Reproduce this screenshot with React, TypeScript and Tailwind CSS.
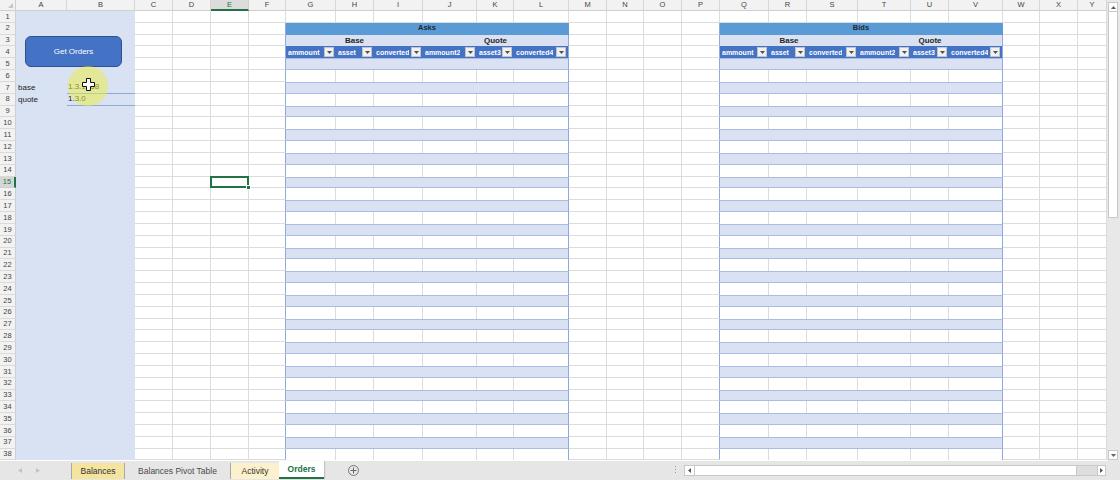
import React from "react";

const LETTERS = ["A", "B", "C", "D", "E", "F", "G", "H", "I", "J", "K", "L", "M", "N", "O", "P", "Q", "R", "S", "T", "U", "V", "W", "X", "Y"];
const HEADERS = ["ammount", "asset", "converted", "ammount2", "asset3", "converted4"];

const GRID =
  "grid grid-cols-[16px_51px_68px_38px_38px_38px_37px_50px_38px_49px_54px_37px_55px_38px_37px_38px_38px_49px_38px_51px_53px_38px_54px_37px_38px_29px] grid-rows-[11px_repeat(38,11.83px)]";

const plain = "border-r border-b border-r-[#dcdcdc] border-b-[#dcdcdc] bg-white";
const beforeTable = "border-r border-b border-r-[#8eaadb] border-b-[#dcdcdc] bg-white";

const DownTri = ({ color = "#505050" }: { color?: string }) => (
  <svg width="5" height="3" viewBox="0 0 5 3">
    <path d="M0 0h5L2.5 3z" fill={color} />
  </svg>
);

function tableCells(r: number, title: string, key: string) {
  if (r === 1) {
    return HEADERS.map((h, i) => <div key={`${key}-${i}`} className={plain} />);
  }
  if (r === 2) {
    return [
      <div
        key={key}
        className="col-span-6 bg-[#5b9bd5] border-r border-b border-r-[#5b9bd5] border-b-[#5b9bd5] flex items-center justify-center text-[7.5px] font-bold leading-none text-[#1d2733]"
      >
        {title}
      </div>,
    ];
  }
  if (r === 3) {
    return [
      <div
        key={`${key}-b`}
        className="col-span-3 bg-[#d9e1f2] flex items-center justify-center text-[8px] font-bold leading-none text-[#262626]"
      >
        Base
      </div>,
      <div
        key={`${key}-q`}
        className="col-span-3 bg-[#d9e1f2] border-r border-r-[#8eaadb] flex items-center justify-center text-[8px] font-bold leading-none text-[#262626]"
      >
        Quote
      </div>,
    ];
  }
  if (r === 4) {
    return HEADERS.map((h, i) => (
      <div
        key={`${key}-${i}`}
        className={
          i === 5
            ? "bg-[#4472c4] border-r border-r-[#8eaadb] flex items-center justify-between pl-[2px] pr-[2px]"
            : "bg-[#4472c4] flex items-center justify-between pl-[2px] pr-[2px]"
        }
      >
        <span className="text-white font-bold text-[7px] leading-none whitespace-nowrap overflow-hidden">{h}</span>
        <span className="shrink-0 w-[10px] h-[10px] bg-[#f0f0f0] border border-[#c4c4c4] flex items-center justify-center">
          <DownTri />
        </span>
      </div>
    ));
  }
  if (r % 2 === 1) {
    return [
      <div
        key={key}
        className="col-span-6 bg-[#d9e1f2] border-r border-b border-t border-r-[#8eaadb] border-b-[#a9bde3] border-t-[#a9bde3]"
      />,
    ];
  }
  return HEADERS.map((h, i) => (
    <div
      key={`${key}-${i}`}
      className={
        i === 5
          ? "bg-white border-r border-r-[#8eaadb]"
          : "bg-white border-r border-r-[#dcdcdc]"
      }
    />
  ));
}

function leftCell(r: number, c: number) {
  const key = `lp-${r}-${c}`;
  if (c === 1) {
    const label = r === 7 ? "base" : r === 8 ? "quote" : "";
    return (
      <div key={key} className="bg-[#d9e2f3] flex items-center pl-[2px] text-[8px] leading-none text-[#222]">
        {label}
      </div>
    );
  }
  const val = r === 7 ? "1.3.1668" : r === 8 ? "1.3.0" : "";
  return (
    <div
      key={key}
      className={
        r === 7 || r === 8
          ? "bg-[#d9e2f3] border-b border-b-[#8eaadb] flex items-center pl-[1px] text-[8px] leading-none text-[#222]"
          : "bg-[#d9e2f3]"
      }
    >
      {val}
    </div>
  );
}

function row(r: number) {
  const out: React.ReactNode[] = [];
  out.push(
    <div
      key={`rh-${r}`}
      className={
        r === 15
          ? "bg-[#d6d6d6] border-r-2 border-b border-r-[#217346] border-b-[#cfcfcf] flex items-center justify-center text-[7.5px] leading-none text-[#217346]"
          : "bg-[#f2f2f2] border-r border-b border-r-[#cfcfcf] border-b-[#dadada] flex items-center justify-center text-[7.5px] leading-none text-[#444]"
      }
    >
      {r}
    </div>
  );
  for (let c = 1; c <= 25; c++) {
    if (c <= 2) {
      out.push(leftCell(r, c));
      continue;
    }
    if (c === 7 || c === 17) {
      out.push(...tableCells(r, c === 7 ? "Asks" : "Bids", `t${c}-${r}`));
      c += 5;
      continue;
    }
    if (c === 5 && r === 15) {
      out.push(
        <div key={`c-${r}-${c}`} className={`${plain} relative`}>
          <div className="absolute left-[-1px] top-[-1px] right-[-1px] bottom-[-1px] border-2 border-[#217346]" />
          <div className="absolute right-[-3px] bottom-[-3px] w-[5px] h-[5px] bg-[#217346] border border-white" />
        </div>
      );
      continue;
    }
    const cls = (c === 6 || c === 16) && r >= 2 ? beforeTable : plain;
    out.push(<div key={`c-${r}-${c}`} className={cls} />);
  }
  return out;
}

const Sheet = () => (
  <div className="relative w-[1107px] h-[461px] overflow-hidden">
    <div className={GRID}>
      <div className="bg-[#f2f2f2] border-r border-b border-r-[#cfcfcf] border-b-[#cfcfcf] relative">
        <svg className="absolute right-[2px] bottom-[2px]" width="5" height="5" viewBox="0 0 5 5">
          <path d="M5 0v5H0z" fill="#c6c6c6" />
        </svg>
      </div>
      {LETTERS.map((l) => (
        <div
          key={l}
          className={
            l === "E"
              ? "bg-[#dcdcdc] border-r border-b-2 border-r-[#cfcfcf] border-b-[#217346] flex items-center justify-center text-[7.5px] leading-none text-[#217346]"
              : "bg-[#f2f2f2] border-r border-b border-r-[#d6d6d6] border-b-[#cfcfcf] flex items-center justify-center text-[7.5px] leading-none text-[#444]"
          }
        >
          {l}
        </div>
      ))}
      {Array.from({ length: 38 }, (_, i) => row(i + 1))}
    </div>

    <div className="absolute left-[25px] top-[36px] w-[97px] h-[31px] rounded-[6px] bg-[#4472c4] border border-[#2f528f] flex items-center justify-center text-white text-[8px] leading-none">
      Get Orders
    </div>

    <div className="absolute left-[68px] top-[66px] w-[40px] h-[40px] rounded-full bg-[#eeee40]/50" />
    <svg className="absolute left-[82px] top-[78px]" width="13" height="13" viewBox="0 0 13 13">
      <path
        d="M4.5 0.5h4v4h4v4h-4v4h-4v-4h-4v-4h4z"
        fill="#ffffff"
        stroke="#111"
        strokeWidth="1"
      />
    </svg>
  </div>
);

const VScroll = () => (
  <div className="w-[13px] h-[461px] bg-[#e8e8e8] flex flex-col items-start pt-[2px] pl-[1px]">
    <div className="w-[10px] h-[10px] bg-[#fdfdfd] border border-[#c8c8c8] flex items-center justify-center">
      <svg width="5" height="3" viewBox="0 0 5 3">
        <path d="M0 3h5L2.5 0z" fill="#606060" />
      </svg>
    </div>
    <div className="w-[10px] h-[206px] bg-white border border-[#c8c8c8] border-t-0" />
    <div className="flex-1" />
    <div className="w-[10px] h-[10px] bg-[#fdfdfd] border border-[#c8c8c8] flex items-center justify-center mb-[1px]">
      <DownTri color="#606060" />
    </div>
  </div>
);

const TabBar = () => (
  <div className="flex-1 bg-[#e6e6e6] flex items-start text-[8.5px] leading-none">
    <div className="w-[71px] h-[19px] flex items-center gap-[14px] pl-[18px]">
      <svg width="4" height="5" viewBox="0 0 4 5">
        <path d="M4 0v5L0 2.5z" fill="#c2c2c2" />
      </svg>
      <svg width="4" height="5" viewBox="0 0 4 5">
        <path d="M0 0v5l4-2.5z" fill="#c2c2c2" />
      </svg>
    </div>
    <div className="w-[53px] h-[16px] mt-[2px] bg-[#f4e49e] border-l border-[#a8a8a8] flex items-center justify-center text-[#333]">
      Balances
    </div>
    <div className="w-[106px] h-[16px] mt-[2px] border-l border-[#a8a8a8] flex items-center justify-center text-[#4a4a4a]">
      Balances Pivot Table
    </div>
    <div className="w-[49px] h-[16px] mt-[2px] bg-[#fcf1cc] border-l border-[#a8a8a8] flex items-center justify-center text-[#333]">
      Activity
    </div>
    <div className="w-[45px] h-[18px] bg-white border-b-2 border-[#217346] shadow-[1px_0_1px_rgba(0,0,0,0.15)] flex items-center justify-center font-bold text-[#217346]">
      Orders
    </div>
    <div className="ml-[24px] mt-[4px] w-[11px] h-[11px] rounded-full border border-[#777] flex items-center justify-center">
      <svg width="7" height="7" viewBox="0 0 7 7">
        <path d="M3.5 0.5v6M0.5 3.5h6" stroke="#666" strokeWidth="1" />
      </svg>
    </div>
    <div className="flex-1" />
    <div className="mt-[5px] mr-[8px] flex flex-col gap-[2px]">
      <div className="w-[1px] h-[1px] bg-[#999]" />
      <div className="w-[1px] h-[1px] bg-[#999]" />
      <div className="w-[1px] h-[1px] bg-[#999]" />
    </div>
    <div className="w-[422px] h-[11px] mt-[4px] mr-[14px] border border-[#c8c8c8] bg-[#dedede] flex">
      <div className="w-[10px] h-full bg-white border-r border-[#c8c8c8] flex items-center justify-center">
        <svg width="3" height="5" viewBox="0 0 3 5">
          <path d="M3 0v5L0 2.5z" fill="#555" />
        </svg>
      </div>
      <div className="w-[382px] h-full bg-white border-r border-[#c8c8c8]" />
      <div className="flex-1" />
      <div className="w-[8px] h-full bg-white border-l border-[#c8c8c8] flex items-center justify-center">
        <svg width="3" height="5" viewBox="0 0 3 5">
          <path d="M0 0v5l3-2.5z" fill="#555" />
        </svg>
      </div>
    </div>
  </div>
);

export default function App() {
  return (
    <div className="w-[1120px] h-[480px] overflow-hidden bg-white flex flex-col font-['Liberation_Sans',Arial,sans-serif]">
      <div className="flex">
        <Sheet />
        <VScroll />
      </div>
      <TabBar />
    </div>
  );
}
